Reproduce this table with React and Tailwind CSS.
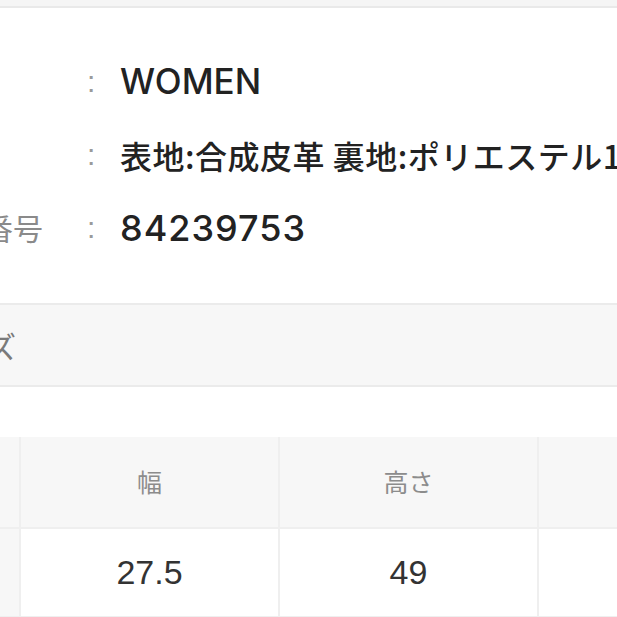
import React from 'react';

const sans = "font-['Liberation_Sans','Noto_Sans_CJK_JP',sans-serif]";
const jp = "font-['Noto_Sans_CJK_JP',sans-serif]";
const inter = "font-['Inter','Noto_Sans_CJK_JP',sans-serif]";

const specs = [
  { label: '性別', value: 'WOMEN', cls: `${inter} text-[35px] font-medium` },
  { label: '素材', value: '表地:合成皮革 裏地:ポリエステル100%', cls: `${jp} text-[32px] tracking-[0.5px] font-medium` },
  { label: '商品番号', value: '84239753', cls: `${inter} text-[36px] font-medium tracking-[1px]` },
];

const cols = [
  { head: 'サイズ', val: 'F' },
  { head: '幅', val: '27.5' },
  { head: '高さ', val: '49' },
  { head: 'マチ', val: '13' },
];

const App = () => {
  return (
    <div className={`w-[617px] h-[617px] overflow-hidden bg-white ${sans}`}>
      <div className="h-[8px] bg-[#f5f5f5] border-b-2 border-[#e9e9e9]" />

      <div className="ml-[-77px] pt-[37px] pb-[39px]">
        {specs.map((row) => (
          <div key={row.label} className="grid grid-cols-[164px_33px_1fr] h-[73px] items-center">
            <span className={`${jp} text-[30px] text-[#8a8a8a] whitespace-nowrap`}>{row.label}</span>
            <span className="text-[30px] text-[#9a9a9a]">:</span>
            <span className={`${row.cls} text-[#222] whitespace-nowrap leading-none`}>{row.value}</span>
          </div>
        ))}
      </div>

      <div className="h-[84px] bg-[#f7f7f7] border-y-2 border-[#ebebeb] flex items-center">
        <span className={`${jp} ml-[-73px] text-[30px] text-[#7a7a7a] whitespace-nowrap`}>サイズ</span>
      </div>

      <div className="h-[50px]" />

      <div className="ml-[-238px] w-[1100px] grid grid-cols-[257px_257px_257px_257px] grid-rows-[90px_87px] gap-[2px] bg-[#efefef] pb-[2px]">
        {cols.map((c) => (
          <div key={c.head} className={`bg-[#f7f7f7] flex items-center justify-center ${jp} text-[25px] text-[#8c8c8c]`}>
            {c.head}
          </div>
        ))}
        {cols.map((c, i) => (
          <div
            key={c.val}
            className={`${i === 0 ? 'bg-[#f7f7f7]' : 'bg-white'} flex items-center justify-center text-[34px] text-[#333]`}
          >
            {c.val}
          </div>
        ))}
      </div>
    </div>
  );
};

export default App;
